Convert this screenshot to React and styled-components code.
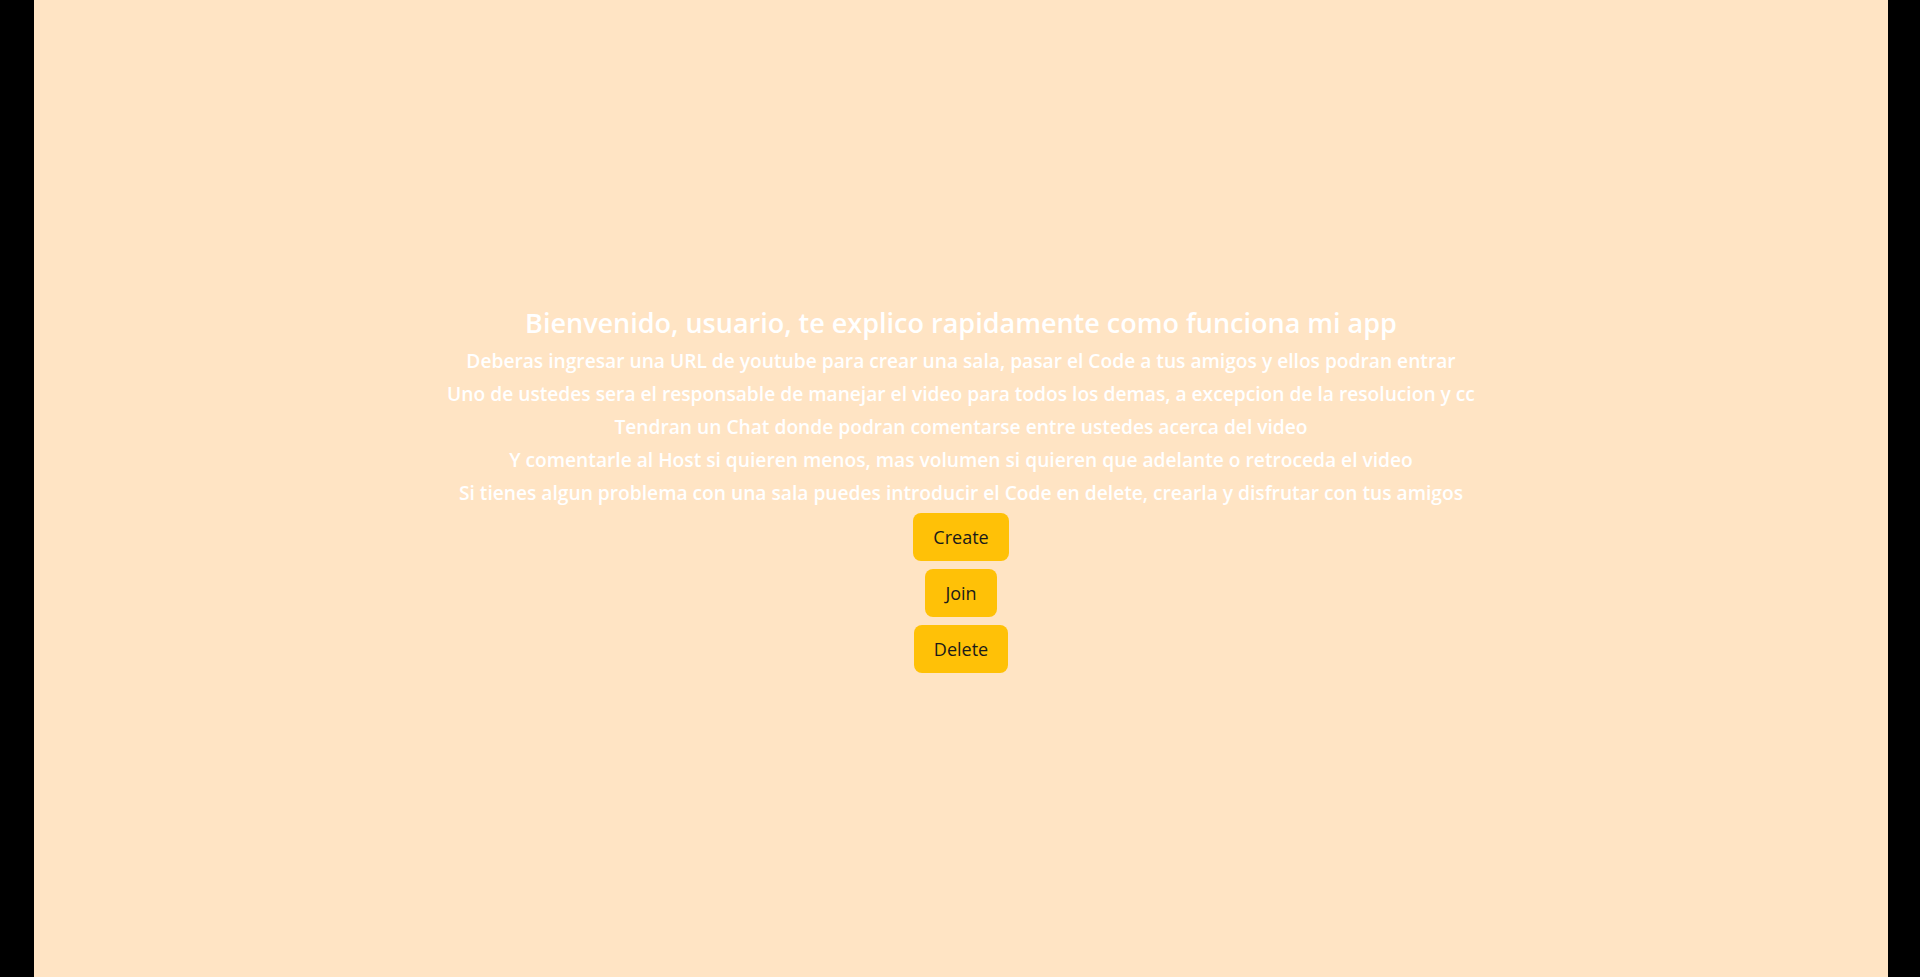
import React from 'react'
import styled, { createGlobalStyle } from 'styled-components'

const GlobalStyle = createGlobalStyle`
    html, body {
        margin: 0;
        padding: 0;
        background: #000;
    }
    * {
        box-sizing: border-box;
    }
`;

const Page = styled.div`
    min-height: 100vh;
    padding: 0 32px 0 34px;
    background: #000;
    display: flex;
`;

const Container = styled.div`
    flex: 1;
    background: #ffe4c4;
    display: flex;
    flex-direction: column;
    align-items: center;
    justify-content: center;
    font-family: "Open Sans", "Noto Sans", sans-serif;
    color: #fff;
    text-align: center;
`;

const Title = styled.h2`
    margin: 0;
    font-size: 27px;
    font-weight: 600;
    line-height: 43px;
`;

const Line = styled.p`
    margin: 0;
    font-size: 19.2px;
    font-weight: 600;
    line-height: 33px;
    white-space: nowrap;
`;

const Button = styled.button`
    margin: 4px 0;
    padding: 0 20px;
    height: 48px;
    border: none;
    border-radius: 8px;
    background: #ffc107;
    color: #1a1a1a;
    font-family: "Open Sans", "Noto Sans", sans-serif;
    font-size: 18px;
    cursor: pointer;
`;

const lines = [
    "Deberas ingresar una URL de youtube para crear una sala, pasar el Code a tus amigos y ellos podran entrar",
    "Uno de ustedes sera el responsable de manejar el video para todos los demas, a excepcion de la resolucion y cc",
    "Tendran un Chat donde podran comentarse entre ustedes acerca del video",
    "Y comentarle al Host si quieren menos, mas volumen si quieren que adelante o retroceda el video",
    "Si tienes algun problema con una sala puedes introducir el Code en delete, crearla y disfrutar con tus amigos",
];

const App = () => {
  return (
    <Page>
        <GlobalStyle/>
        <Container>
            <Title>Bienvenido, usuario, te explico rapidamente como funciona mi app</Title>
            {lines.map((l) => (
                <Line key={l}>{l}</Line>
            ))}
            <Button>Create</Button>
            <Button>Join</Button>
            <Button>Delete</Button>
        </Container>
    </Page>
  )
}

export default App
